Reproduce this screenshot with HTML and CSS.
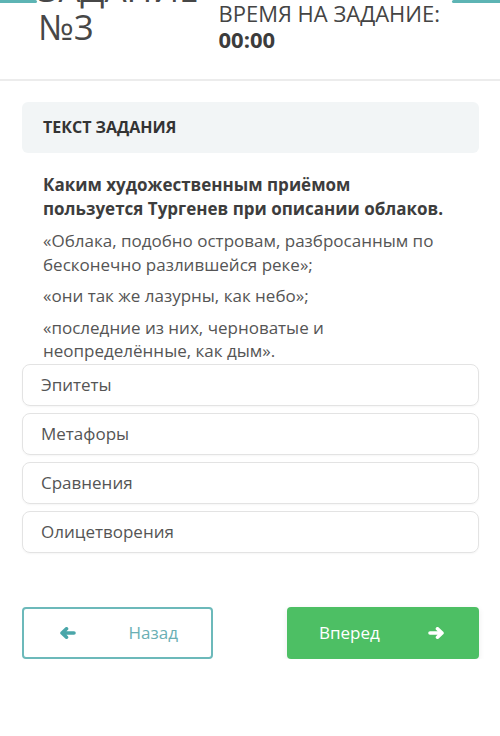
FILE: index.html
```html
<!DOCTYPE html>
<html lang="ru">
<head>
    <meta charset="UTF-8">
    <meta name="viewport" content="width=device-width, initial-scale=1.0">
    <title>Задание №3</title>
    <link rel="stylesheet" href="styles.css">
</head>
<body>

<div class="top_bar">
    <span class="bar_left"></span>
    <span class="bar_right"></span>
</div>

<div class="header">
    <div class="task_title">ЗАДАНИЕ<br>№3</div>
    <div class="task_time">
        <div>ВРЕМЯ НА ЗАДАНИЕ:</div>
        <div class="time_value">00:00</div>
    </div>
</div>

<div class="main_div">
    <div class="section_head">ТЕКСТ ЗАДАНИЯ</div>

    <div class="task_text">
        <p class="question">Каким художественным приёмом<br>пользуется Тургенев при описании облаков.</p>
        <p>«Облака, подобно островам, разбросанным по бесконечно разлившейся реке»;</p>
        <p>«они так же лазурны, как небо»;</p>
        <p>«последние из них, черноватые и неопределённые, как дым».</p>
    </div>

    <div class="answers">
        <div class="answer">Эпитеты</div>
        <div class="answer">Метафоры</div>
        <div class="answer">Сравнения</div>
        <div class="answer">Олицетворения</div>
    </div>

    <div class="nav_buttons">
        <button class="btn_back">
            <svg width="17" height="12" viewBox="0 0 17 12">
                <path d="M3 6H15 M7.5 1.8L3 6L7.5 10.2" fill="none" stroke="#4aa6a9" stroke-width="3.6" stroke-linecap="round" stroke-linejoin="round"/>
            </svg>
            <span>Назад</span>
        </button>
        <button class="btn_next">
            <span>Вперед</span>
            <svg width="17" height="12" viewBox="0 0 17 12">
                <path d="M2 6H14 M9.5 1.8L14 6L9.5 10.2" fill="none" stroke="#ffffff" stroke-width="3.6" stroke-linecap="round" stroke-linejoin="round"/>
            </svg>
        </button>
    </div>
</div>

</body>
</html>
```

FILE: styles.css
```css
body{
    margin: 0;
    font-family: "Open Sans", "Noto Sans", sans-serif;
    background-color: #ffffff;
    color: #555;
    overflow: hidden;
}

/* teal strips at the very top */
.top_bar{
    position: absolute;
    top: 0;
    left: 0;
    right: 0;
    display: flex;
    justify-content: space-between;
}
.bar_left{
    width: 37px;
    height: 3px;
    background-color: #5db4b4;
    border-radius: 0 3px 3px 0;
}
.bar_right{
    width: 48px;
    height: 3px;
    background-color: #5db4b4;
    border-radius: 3px 0 0 3px;
}

.header{
    display: flex;
    align-items: flex-start;
    gap: 20px;
    height: 79px;
    padding-left: 38px;
    border-bottom: 2px solid #ececec;
}
.task_title{
    margin-top: -30px;
    font-size: 35px;
    line-height: 38px;
    color: #474747;
}
.task_time{
    font-size: 22px;
    line-height: 26px;
    color: #444;
}
.time_value{
    font-weight: 700;
    color: #3c3c3c;
}

.main_div{
    padding: 0 21px 0 22px;
}
.section_head{
    margin-top: 21px;
    height: 51px;
    line-height: 51px;
    padding-left: 21px;
    background-color: #f2f5f6;
    border-radius: 6px;
    font-size: 16px;
    font-weight: 700;
    color: #333;
}

.task_text{
    padding: 0 21px;
    margin-top: 20px;
}
.task_text p{
    margin: 0 0 8px 0;
    font-size: 17px;
    line-height: 23.5px;
    color: #555;
}
.task_text .question{
    font-weight: 700;
    line-height: 24px;
    color: #3d3d3d;
}
.task_text p:last-child{
    margin-bottom: 1px;
}

.answers{
    display: flex;
    flex-direction: column;
    gap: 7px;
}
.answer{
    height: 40px;
    line-height: 40px;
    padding-left: 18px;
    border: 1px solid #e3e3e3;
    border-radius: 8px;
    box-shadow: 0 1px 2px rgba(0, 0, 0, 0.04);
    font-size: 17px;
    color: #555;
}

.nav_buttons{
    display: flex;
    justify-content: space-between;
    margin-top: 54px;
}
.nav_buttons button{
    width: 192px;
    height: 52px;
    display: flex;
    align-items: center;
    justify-content: space-between;
    border-radius: 4px;
    font-family: "Open Sans", "Noto Sans", sans-serif;
    font-size: 17px;
    cursor: pointer;
}
.btn_back{
    width: 191px !important;
    padding: 0 33px 0 35px;
    background-color: #ffffff;
    border: 2px solid #6cb9ba;
    color: #6aafb4;
}
.btn_next{
    padding: 0 34px 0 32px;
    background-color: #4dbf64;
    border: none;
    color: #ffffff;
    box-shadow: 0 2px 6px rgba(0, 0, 0, 0.08);
}
.nav_buttons svg{
    display: block;
}
```
